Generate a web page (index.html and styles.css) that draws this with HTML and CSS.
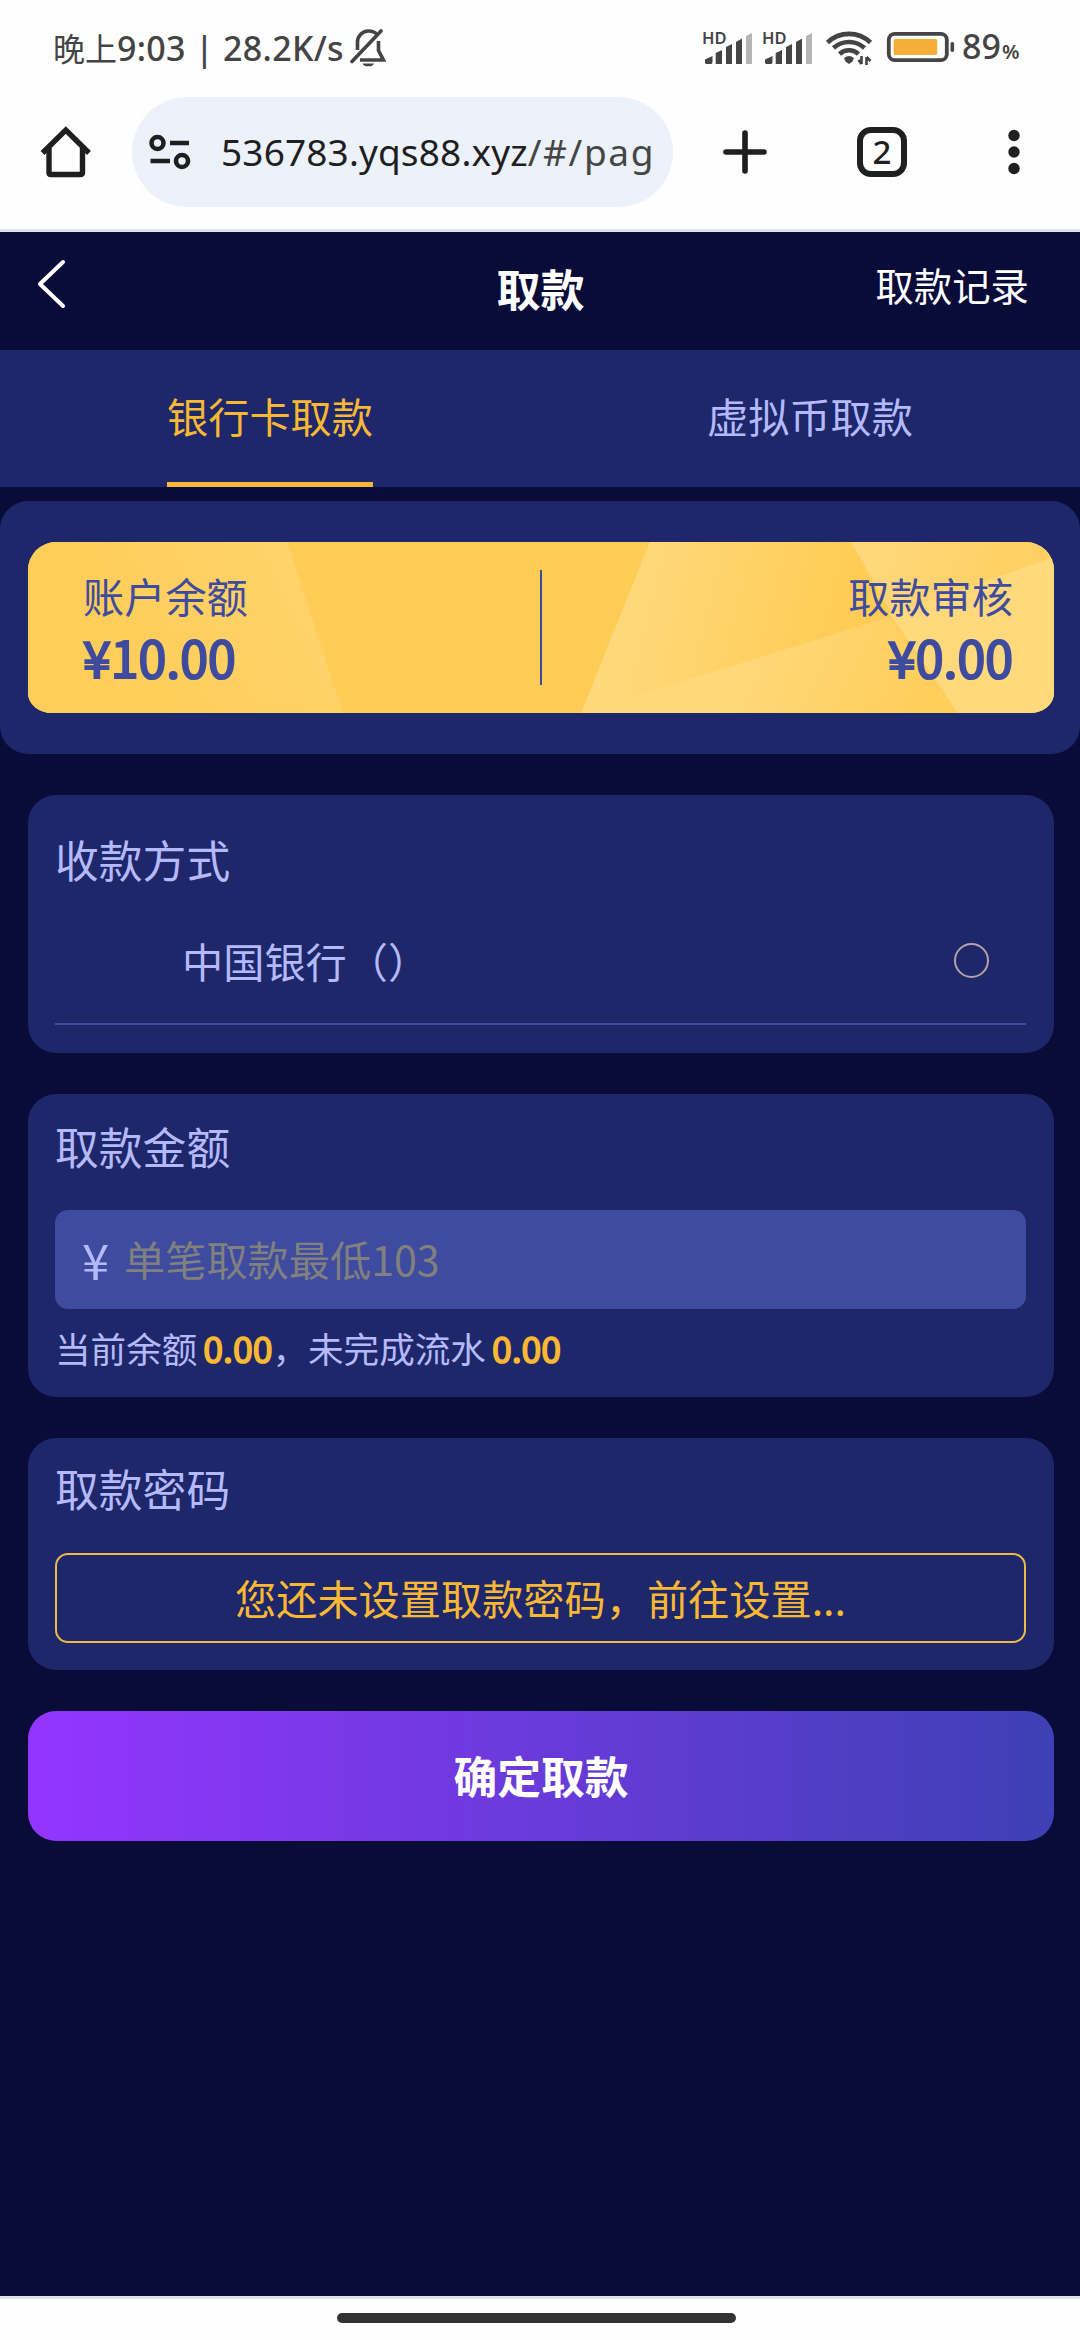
FILE: index.html
```html
<!DOCTYPE html>
<html lang="zh-CN">
<head>
<meta charset="utf-8">
<title>取款</title>
<link rel="stylesheet" href="styles.css">
</head>
<body>
<div class="status">
  <span class="clock">晚上<span class="clock-latin">9:03 | 28.2K/s</span></span>
  <svg class="bell" width="36" height="40" viewBox="0 0 36 40" fill="none" stroke="#444" stroke-width="3.6">
    <path d="M7.5 23V15.500A11 11 0 0 1 18.500 4C22 4 25 5.200 27 7.500M28.500 14V23.500L33.500 33H10"/>
    <path d="M2 34.500L31 4" stroke-linecap="round"/>
    <path d="M12.500 36.500H24A6 4 0 0 1 12.500 36.500Z" fill="#444" stroke="none"/>
  </svg>
  <div class="indicators">
    <div class="signal"><span class="hd">HD</span>
      <svg width="50" height="34" viewBox="0 0 50 34" fill="#444"><path d="M2 32V28.500L9.500 25V31.500L8.500 33H3ZM12.700 33V22L19 19V33ZM23 33V16L29 13V33ZM33 33V11L39 7.500V33Z"/><path d="M43 33V5L49 2V33Z" fill="#b5b5b5"/></svg>
    </div>
    <div class="signal"><span class="hd">HD</span>
      <svg width="50" height="34" viewBox="0 0 50 34" fill="#444"><path d="M2 32V28.500L9.500 25V31.500L8.500 33H3ZM12.700 33V22L19 19V33ZM23 33V16L29 13V33ZM33 33V11L39 7.500V33Z"/><path d="M43 33V5L49 2V33Z" fill="#b5b5b5"/></svg>
    </div>
    <svg class="wifi" width="47" height="38" viewBox="0 0 47 38" fill="none" stroke="#444" stroke-width="4.600">
      <path d="M1.500 14.500A31 31 0 0 1 44.500 14.500M7.500 20A23 23 0 0 1 38.500 20M13.500 26A14 14 0 0 1 32.500 26"/>
      <path d="M18 30Q23 26 28 30L26.500 33.500L23 36L19.500 33.500Z" fill="#444" stroke="none"/>
      <path d="M35.500 28V36M35.500 36L32.500 32M40.500 37V29M40.500 29L44.500 33" stroke-width="2.600"/>
    </svg>
    <svg class="battery" width="70" height="32" viewBox="0 0 70 32">
      <rect x="2.800" y="2.800" width="58" height="26.400" rx="6" fill="none" stroke="#444" stroke-width="3.800"/>
      <rect x="7.700" y="8" width="43.500" height="16" rx="1.500" fill="#f5ae38"/>
      <rect x="64.500" y="11" width="3.600" height="10" rx="1.800" fill="#444"/>
    </svg>
    <span class="level">89<small class="percent">%</small></span>
  </div>
</div>
<div class="toolbar">
  <svg class="home" width="52" height="54" viewBox="0 0 52 54" fill="none" stroke="#1f1f1f" stroke-width="5.400" stroke-linejoin="round">
    <path d="M9 23V47.500Q9 49.500 11 49.500H40Q42.500 49.500 42.500 47.500V23"/>
    <path d="M2.500 28L25.800 5L49 28" stroke-linejoin="miter"/>
  </svg>
  <div class="address">
    <svg width="44" height="36" viewBox="0 0 44 36" fill="none" stroke="#1f1f1f" stroke-width="4.600">
      <circle cx="9.500" cy="9" r="6"/><path d="M22 9H41M2.500 27H22"/><circle cx="34" cy="27" r="6"/>
    </svg>
    <div class="url"><span class="host">536783.yqs88.xyz</span><span class="path">/#/pag</span></div>
  </div>
  <svg class="plus" width="46" height="46" viewBox="0 0 46 46" stroke="#1f1f1f" stroke-width="5.600" stroke-linecap="round"><path d="M23 4V42M4 23H42"/></svg>
  <div class="tab-count">2</div>
  <svg class="more" width="14" height="46" viewBox="0 0 14 46" fill="#1f1f1f"><circle cx="7" cy="6.500" r="5.700"/><circle cx="7" cy="23" r="5.700"/><circle cx="7" cy="39.500" r="5.700"/></svg>
</div>
<main class="page">
  <header class="nav">
    <svg width="31" height="52" viewBox="0 0 31 52" fill="none" stroke="#fff" stroke-width="4" stroke-linecap="round" stroke-linejoin="round"><path d="M27 4L4 26L27 48"/></svg>
    <h1 class="nav-title">取款</h1>
    <a class="nav-link">取款记录</a>
  </header>
  <nav class="tabs">
    <div class="tab"><span class="tab-label active">银行卡取款</span></div>
    <div class="tab"><span class="tab-label">虚拟币取款</span></div>
  </nav>
  <section class="balance">
    <div class="gold">
      <svg class="facets" width="1026" height="171" viewBox="0 0 1026 171">
        <defs>
          <linearGradient id="a" gradientUnits="userSpaceOnUse" x1="280" y1="40" x2="110" y2="130"><stop offset="0" stop-color="#ffd36b"/><stop offset="1" stop-color="#ffce5a"/></linearGradient>
          <linearGradient id="b" gradientUnits="userSpaceOnUse" x1="600" y1="60" x2="800" y2="110"><stop offset="0" stop-color="#ffd87b"/><stop offset="1" stop-color="#ffcd56"/></linearGradient>
          <linearGradient id="c" gradientUnits="userSpaceOnUse" x1="720" y1="100" x2="890" y2="180"><stop offset="0" stop-color="#ffd879"/><stop offset="1" stop-color="#ffce5b"/></linearGradient>
          <linearGradient id="d" gradientUnits="userSpaceOnUse" x1="850" y1="0" x2="980" y2="40"><stop offset="0" stop-color="#ffd87b"/><stop offset="1" stop-color="#ffd063"/></linearGradient>
        </defs>
        <path d="M0 0H259L315 171H0Z" fill="url(#a)"/>
        <path d="M622 0H823L868 80L553 171Z" fill="url(#b)"/>
        <path d="M553 171L861 75L930 171Z" fill="url(#c)"/>
        <path d="M861 71L1026 15V171H930Z" fill="#ffd97c"/>
        <path d="M823 0H1026V15L864 72Z" fill="url(#d)"/>
      </svg>
      <div class="figure"><span class="figure-label">账户余额</span><strong class="amount">¥10.00</strong></div>
      <i class="separator"></i>
      <div class="figure right"><span class="figure-label">取款审核</span><strong class="amount">¥0.00</strong></div>
    </div>
  </section>
  <section class="card method">
    <h2 class="card-title">收款方式</h2>
    <div class="bank"><span>中国银行（）</span><i class="radio"></i></div>
  </section>
  <section class="card sum">
    <h2 class="card-title">取款金额</h2>
    <div class="field"><span class="yen">¥</span><span class="placeholder">单笔取款最低103</span></div>
    <p class="hint">当前余额<b class="hint-value">0.00</b>，未完成流水<b class="hint-value">0.00</b></p>
  </section>
  <section class="card password">
    <h2 class="card-title">取款密码</h2>
    <div class="set-password">您还未设置取款密码，前往设置...</div>
  </section>
  <div class="submit">确定取款</div>
</main>
<footer class="gesture"><i class="gesture-bar"></i></footer>
</body>
</html>
```

FILE: styles.css
```css
* { box-sizing: border-box; }
body {
  margin: 0;
  width: 1080px;
  height: 2340px;
  display: flex;
  flex-direction: column;
  overflow: hidden;
  background: #fefefe;
  font-family: "Noto Sans CJK SC", sans-serif;
  color: #b4b9fb;
}
svg { display: block; flex: none; }
h1, h2, p { margin: 0; font-weight: 400; }

.status { display: flex; height: 97px; padding: 0 51px 0 53px; color: #444; }
.clock { width: 297px; margin-top: 23px; font-size: 32px; line-height: 48px; white-space: nowrap; }
.clock-latin { font-family: "Noto Sans", sans-serif; font-size: 34px; font-weight: 500; letter-spacing: 0.3px; }
.bell { margin-top: 27px; }
.indicators { display: flex; margin-left: auto; }
.signal { position: relative; width: 50px; height: 34px; margin: 31px 10px 0 0; }
.hd { position: absolute; left: -1px; top: -1px; font: 600 16.5px/16px "Noto Sans", sans-serif; }
.wifi { margin: 28px 0 0 3px; }
.battery { margin: 31px 0 0 13px; }
.level { width: 67px; margin: 23px 0 0 6px; font: 500 34px/46px "Noto Sans", sans-serif; white-space: nowrap; }
.percent { font-size: 20px; font-weight: 600; margin-left: 1px; }

.toolbar { display: flex; align-items: center; height: 135px; padding: 0 59px 22px 40px; border-bottom: 3px solid #dfe2e6; color: #1f1f1f; }
.address { display: flex; align-items: center; width: 541px; height: 110px; margin-left: 40px; padding-left: 16px; border-radius: 55px; background: #ecf1fa; }
.url { width: 431px; margin-left: 29px; overflow: hidden; white-space: nowrap; font: 37px/60px "Noto Sans", sans-serif; letter-spacing: 0.15px; }
.path { color: #444746; letter-spacing: 1.6px; }
.plus { margin-left: 49px; }
.tab-count { width: 50px; height: 50px; margin-left: 89px; border: 6px solid #1f1f1f; border-radius: 14px; text-align: center; font: 500 33px/38px "Noto Sans", sans-serif; }
.more { margin-left: auto; }

.page { display: flex; flex-direction: column; height: 2064px; background: #090b38; }
.nav { display: grid; grid-template-columns: 1fr auto 1fr; align-items: start; height: 118px; padding: 26px 51px 0 36px; color: #fff; }
.nav-title { font-size: 44px; line-height: 60px; font-weight: 700; margin-left: 16px; }
.nav-link { justify-self: end; font-size: 38.4px; line-height: 52px; }
.tabs { display: flex; height: 137px; background: #1e276a; }
.tab { flex: 1; display: flex; justify-content: center; }
.tab-label { height: 137px; font-size: 41.200px; line-height: 131px; }
.active { color: #f8b833; border-bottom: 5px solid #f8b833; }

.balance { height: 253px; margin-top: 14px; padding: 41px 26px 0 28px; border-radius: 28px; background: #1e276a; }
.gold { position: relative; display: flex; height: 171px; padding: 0 41px 0 55px; border-radius: 28px 28px 24px 24px / 28px 28px 20px 20px; overflow: hidden; background: #ffcd56; color: #3e4b9e; }
.facets { position: absolute; left: 0; top: 0; }
.figure { position: relative; display: flex; flex-direction: column; width: 457px; padding-top: 25px; }
.right { flex: 1; align-items: flex-end; }
.figure-label { font-size: 41.200px; line-height: 56px; }
.amount { font-size: 50px; line-height: 66px; font-weight: 400; -webkit-text-stroke: 2.2px; }
.separator { position: relative; width: 2px; height: 115px; margin-top: 28px; background: #3e4b9e; }

.card { margin: 41px 26px 0 28px; padding: 0 28px 0 27px; border-radius: 28px; background: #1e276a; }
.card-title { font-size: 43.800px; line-height: 60px; }
.method { height: 258px; padding-top: 34px; }
.bank { display: flex; justify-content: space-between; height: 136px; padding: 40px 37px 0 127px; border-bottom: 2px solid #3e4b9e; font-size: 41.200px; line-height: 62px; }
.radio { width: 35px; height: 35px; margin-top: 14px; border: 2.5px solid #b3a3a6; border-radius: 50%; }
.sum { height: 303px; padding-top: 22px; }
.field { display: flex; height: 99px; margin-top: 34px; padding-left: 27px; border-radius: 13px; background: #3e4b9e; line-height: 97px; }
.yen { width: 42px; font-size: 49px; }
.placeholder { color: #808080; font-size: 41.200px; }
.hint { margin-top: 14px; font-size: 35.600px; line-height: 50px; }
.hint-value { color: #f8b833; margin-left: 6px; font-weight: 400; -webkit-text-stroke: 1.6px; }
.password { height: 232px; padding-top: 20px; }
.set-password { height: 90px; margin-top: 35px; border: 2px solid #eeb84b; border-radius: 13px; color: #f8b833; text-align: center; font-size: 41.200px; line-height: 84px; }
.submit { height: 130px; margin: 41px 26px 0 28px; border-radius: 28px; background: linear-gradient(90deg, #9435ff, #3e40b5); color: #fff; text-align: center; font-size: 43.800px; font-weight: 700; line-height: 129px; }

.gesture { height: 44px; padding-top: 14px; border-top: 3px solid #dfe2e2; }
.gesture-bar { display: block; width: 399px; height: 10px; margin: 0 auto 0 337px; border-radius: 5px; background: #333; }
```
